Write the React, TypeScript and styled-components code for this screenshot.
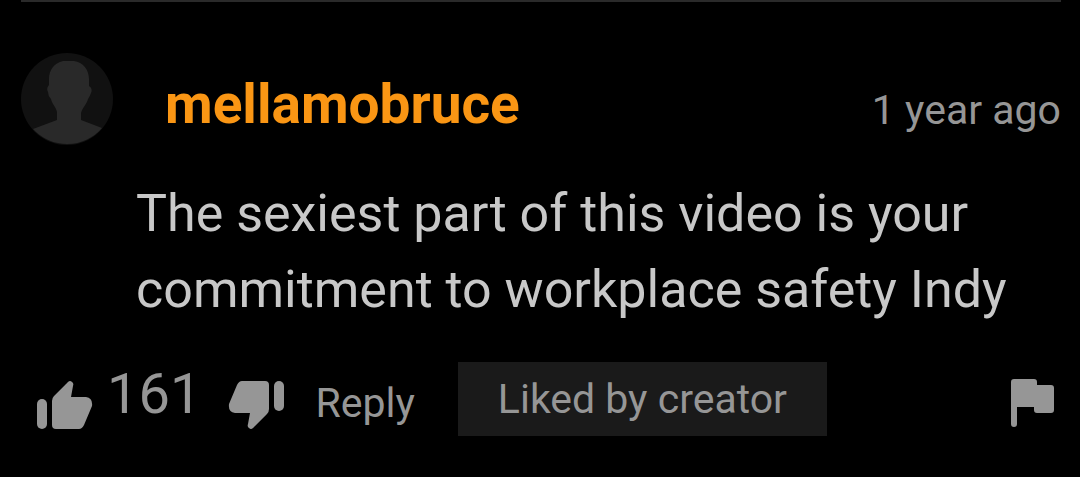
import React from "react";
import styled, { createGlobalStyle } from "styled-components";

const GlobalStyle = createGlobalStyle`
  * { box-sizing: border-box; }
  body { margin: 0; background: #000; font-family: Roboto, sans-serif; }
`;
const Comment = styled.article`
  margin: 0 19px 0 21px;
  border-top: 2px solid #2a2a2a;
  padding: 51px 0 40px;
`;
const Header = styled.header`
  display: flex;
  align-items: center;
`;
const Avatar = styled.svg`
  width: 92px;
  height: 92px;
  margin-right: 52px;
  flex: none;
`;
const Author = styled.a`
  color: #fa9614;
  font-size: 55px;
  line-height: 60px;
  font-weight: 700;
  text-decoration: none;
  padding-top: 10px;
`;
const Time = styled.time`
  margin-left: auto;
  color: #969696;
  font-size: 41px;
  line-height: 48px;
  padding-top: 22px;
`;
const Body = styled.p`
  margin: 31px 0 0 115px;
  color: #c8c8c8;
  font-size: 52px;
  line-height: 76px;
`;
const Actions = styled.footer`
  display: flex;
  align-items: center;
  margin-top: 34px;
`;
const IconButton = styled.button`
  border: 0;
  padding: 0;
  background: none;
  color: #969696;
  cursor: pointer;
  svg { display: block; fill: currentColor; }
`;
const Vote = styled(IconButton)<{ $down?: boolean }>`
  margin: ${(p) => (p.$down ? "12px 31px 0 27px" : "12px 14px 0 16px")};
  svg { transform: ${(p) => (p.$down ? "rotate(180deg)" : "none")}; }
`;
const Count = styled.span`
  color: #969696;
  font-size: 56px;
  line-height: 60px;
  margin-bottom: 10px;
`;
const Reply = styled.button`
  border: 0;
  padding: 8px 0 0;
  background: none;
  color: #969696;
  font: 41px/48px Roboto, sans-serif;
  cursor: pointer;
`;
const Badge = styled.span`
  margin-left: 43px;
  padding: 0 40px;
  background: #1a1a1a;
  color: #969696;
  font-size: 41px;
  line-height: 74px;
`;
const Flag = styled(IconButton)`
  margin: 8px 7px 0 auto;
`;

const ThumbIcon = () => (
  <svg width="56" height="48" viewBox="0 0 56 48" aria-hidden="true">
    <rect x="0" y="18" width="10" height="30" rx="5" />
    <path d="M15 20Q15 17 17 15L31 1Q33-1 35 1Q37 2 36 5L34 16H49Q56 17 55 25L47 44Q45 48 42 48H19Q15 48 15 44Z" />
  </svg>
);

export default function App() {
  return (
    <>
      <GlobalStyle />
      <Comment>
        <Header>
          <Avatar viewBox="0 0 92 92" aria-hidden="true">
            <circle cx="46" cy="46" r="46" fill="#111" />
            <path
              fill="#292929"
              d="M42 8H53C62 9 68 17 68 26V33Q72 35 70 40Q69 43 67 46C66 51 61 55 60 60V67L81 75A46 46 0 0 1 12 76L36 67V59C35 54 31 51 30 46Q27 43 27 39Q25 35 28 32V26C28 17 33 10 42 8Z"
            />
          </Avatar>
          <Author href="#author">mellamobruce</Author>
          <Time>1 year ago</Time>
        </Header>
        <Body>The sexiest part of this video is your commitment to workplace safety Indy</Body>
        <Actions>
          <Vote aria-label="Like"><ThumbIcon /></Vote>
          <Count>161</Count>
          <Vote $down aria-label="Dislike"><ThumbIcon /></Vote>
          <Reply>Reply</Reply>
          <Badge>Liked by creator</Badge>
          <Flag aria-label="Report comment">
            <svg width="43" height="48" viewBox="0 0 43 48" aria-hidden="true">
              <path d="M3 0H23Q26 0 26 3V6H40Q43 6 43 9V31Q43 34 40 34H26Q23 34 23 31V28H6V45Q6 48 3 48Q0 48 0 45V3Q0 0 3 0Z" />
            </svg>
          </Flag>
        </Actions>
      </Comment>
    </>
  );
}
